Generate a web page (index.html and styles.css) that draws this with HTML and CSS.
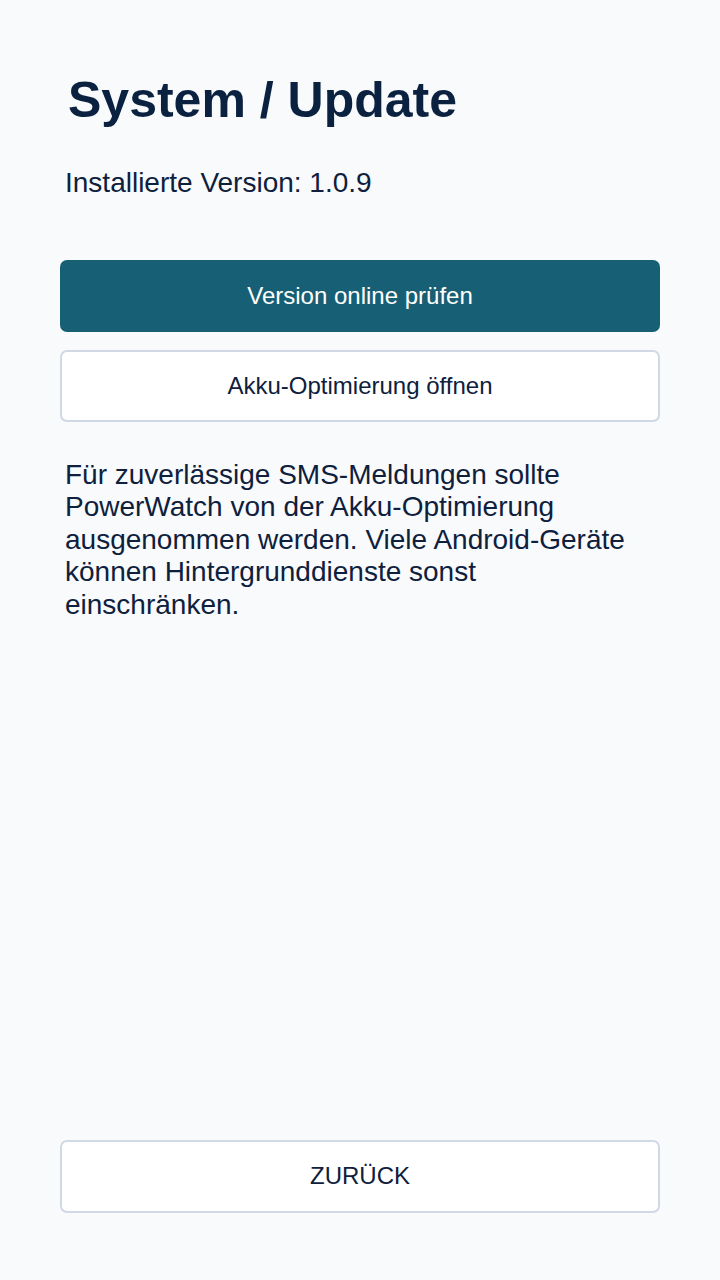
FILE: index.html
```html
<!DOCTYPE html>
<html lang="de">
<head>
<meta charset="utf-8">
<title>System / Update</title>
<link rel="stylesheet" href="styles.css">
</head>
<body>
<main class="screen">
  <h1 class="title">System / Update</h1>
  <p class="version">Installierte Version: 1.0.9</p>
  <div class="actions">
    <button class="btn btn-primary">Version online prüfen</button>
    <button class="btn btn-outline">Akku-Optimierung öffnen</button>
  </div>
  <p class="hint">Für zuverlässige SMS-Meldungen sollte PowerWatch von der Akku-Optimierung ausgenommen werden. Viele Android-Geräte können Hintergrunddienste sonst einschränken.</p>
  <div class="spacer"></div>
  <button class="btn btn-outline btn-back">ZURÜCK</button>
</main>
</body>
</html>
```

FILE: styles.css
```css
* { box-sizing: border-box; }
html, body {
  margin: 0;
  padding: 0;
  background: #f8fafc;
}
body {
  font-family: "Liberation Sans", Arial, sans-serif;
  color: #0e203c;
}
.screen {
  min-height: 1280px;
  display: flex;
  flex-direction: column;
  padding: 72px 60px 67px;
}
.title {
  margin: 0;
  padding: 0 8px;
  font-size: 50px;
  line-height: 1.15;
  font-weight: 700;
  color: #0b2140;
}
.version {
  margin: 37px 0 0;
  padding: 0 5px;
  font-size: 28px;
  line-height: 1.15;
}
.actions {
  display: flex;
  flex-direction: column;
  gap: 18px;
  margin-top: 61px;
}
.btn {
  display: block;
  width: 100%;
  height: 72px;
  border-radius: 7px;
  font-family: "Liberation Sans", Arial, sans-serif;
  font-size: 24px;
  cursor: pointer;
}
.btn-primary {
  background: #175f75;
  border: 0;
  color: #ffffff;
}
.btn-outline {
  background: #ffffff;
  border: 2px solid #cfd8e4;
  color: #0e203c;
}
.btn-back {
  height: 73px;
  padding-bottom: 3px;
}
.hint {
  margin: 37px 0 0;
  padding: 0 5px;
  font-size: 28px;
  line-height: 32.5px;
}
.spacer { flex: 1; }
```
